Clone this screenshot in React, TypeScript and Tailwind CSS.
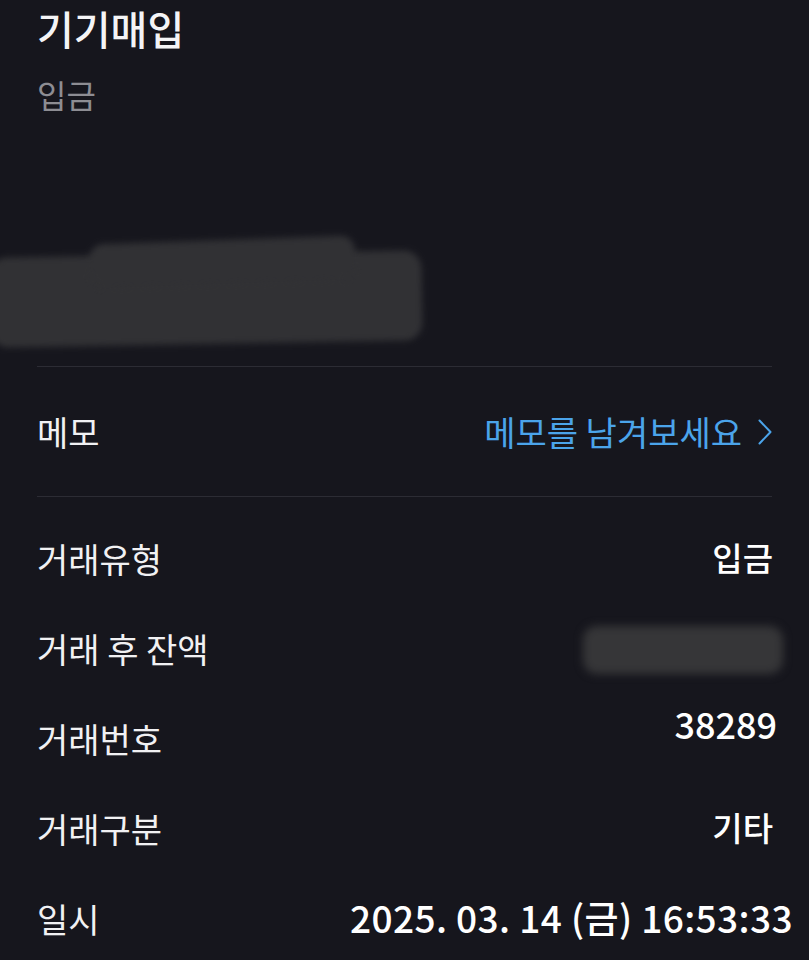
export default function App() {
  const font = { fontFamily: '"Noto Sans CJK KR", "Noto Sans", sans-serif' };
  return (
    <div className="w-[809px] h-[960px] overflow-hidden bg-[#16161d] text-white" style={font}>
      {/* Header */}
      <div className="px-[37px] pt-[2px]">
        <div className="text-[40px] font-medium leading-[52px] text-[#f4f4f6]">기기매입</div>
        <div className="mt-[20px] text-[32px] leading-[40px] text-[#8d8d93]">입금</div>
      </div>

      {/* Redacted amount */}
      <div className="relative h-[252px]">
        <div className="absolute left-[-10px] top-[140px] h-[90px] w-[432px] rotate-[-1deg] rounded-[18px] bg-[#313134] blur-[3px]" />
        <div className="absolute left-[90px] top-[126px] h-[44px] w-[265px] rotate-[-2deg] rounded-[14px] bg-[#313134] blur-[3px]" />
      </div>

      <div className="mx-[37px] h-px bg-[#2c2c34]" />

      {/* Memo */}
      <div className="flex h-[129px] items-center justify-between px-[37px]">
        <span className="text-[34px] text-[#f1f1f3]">메모</span>
        <span className="flex items-center gap-[16px] text-[34px] text-[#4ba4ea]">
          메모를 남겨보세요
          <svg width="14" height="26" viewBox="0 0 14 26" fill="none">
            <path d="M1.5 1.5 L12.5 13 L1.5 24.5" stroke="#4ba4ea" strokeWidth="2" strokeLinecap="round" strokeLinejoin="round" />
          </svg>
        </span>
      </div>

      <div className="mx-[37px] h-px bg-[#2c2c34]" />

      {/* Details */}
      <div className="flex flex-col pt-[16px]">
        <div className="flex h-[90px] items-center justify-between pl-[37px] pr-[36px]">
          <span className="text-[34px] text-[#f1f1f3]">거래유형</span>
          <span className="text-[33px] font-medium">입금</span>
        </div>
        <div className="flex h-[90px] items-center justify-between pl-[37px] pr-[36px]">
          <span className="text-[34px] text-[#f1f1f3]">거래 후 잔액</span>
          <div className="relative mr-[-20px] h-[60px] w-[220px]">
            <div className="absolute inset-x-[10px] top-[8px] h-[48px] rounded-[14px] bg-[#363638] blur-[4px]" />
          </div>
        </div>
        <div className="flex h-[90px] items-center justify-between pl-[37px] pr-[32px]">
          <span className="text-[34px] text-[#f1f1f3]">거래번호</span>
          <span className="mt-[-30px] text-[36px] font-medium">38289</span>
        </div>
        <div className="flex h-[90px] items-center justify-between pl-[37px] pr-[36px]">
          <span className="text-[34px] text-[#f1f1f3]">거래구분</span>
          <span className="text-[33px] font-medium">기타</span>
        </div>
        <div className="flex h-[90px] items-center justify-between pl-[37px] pr-[16px]">
          <span className="text-[34px] text-[#f1f1f3]">일시</span>
          <span className="text-[37px] font-medium tracking-[0.4px]">2025. 03. 14 (금) 16:53:33</span>
        </div>
      </div>
    </div>
  );
}
